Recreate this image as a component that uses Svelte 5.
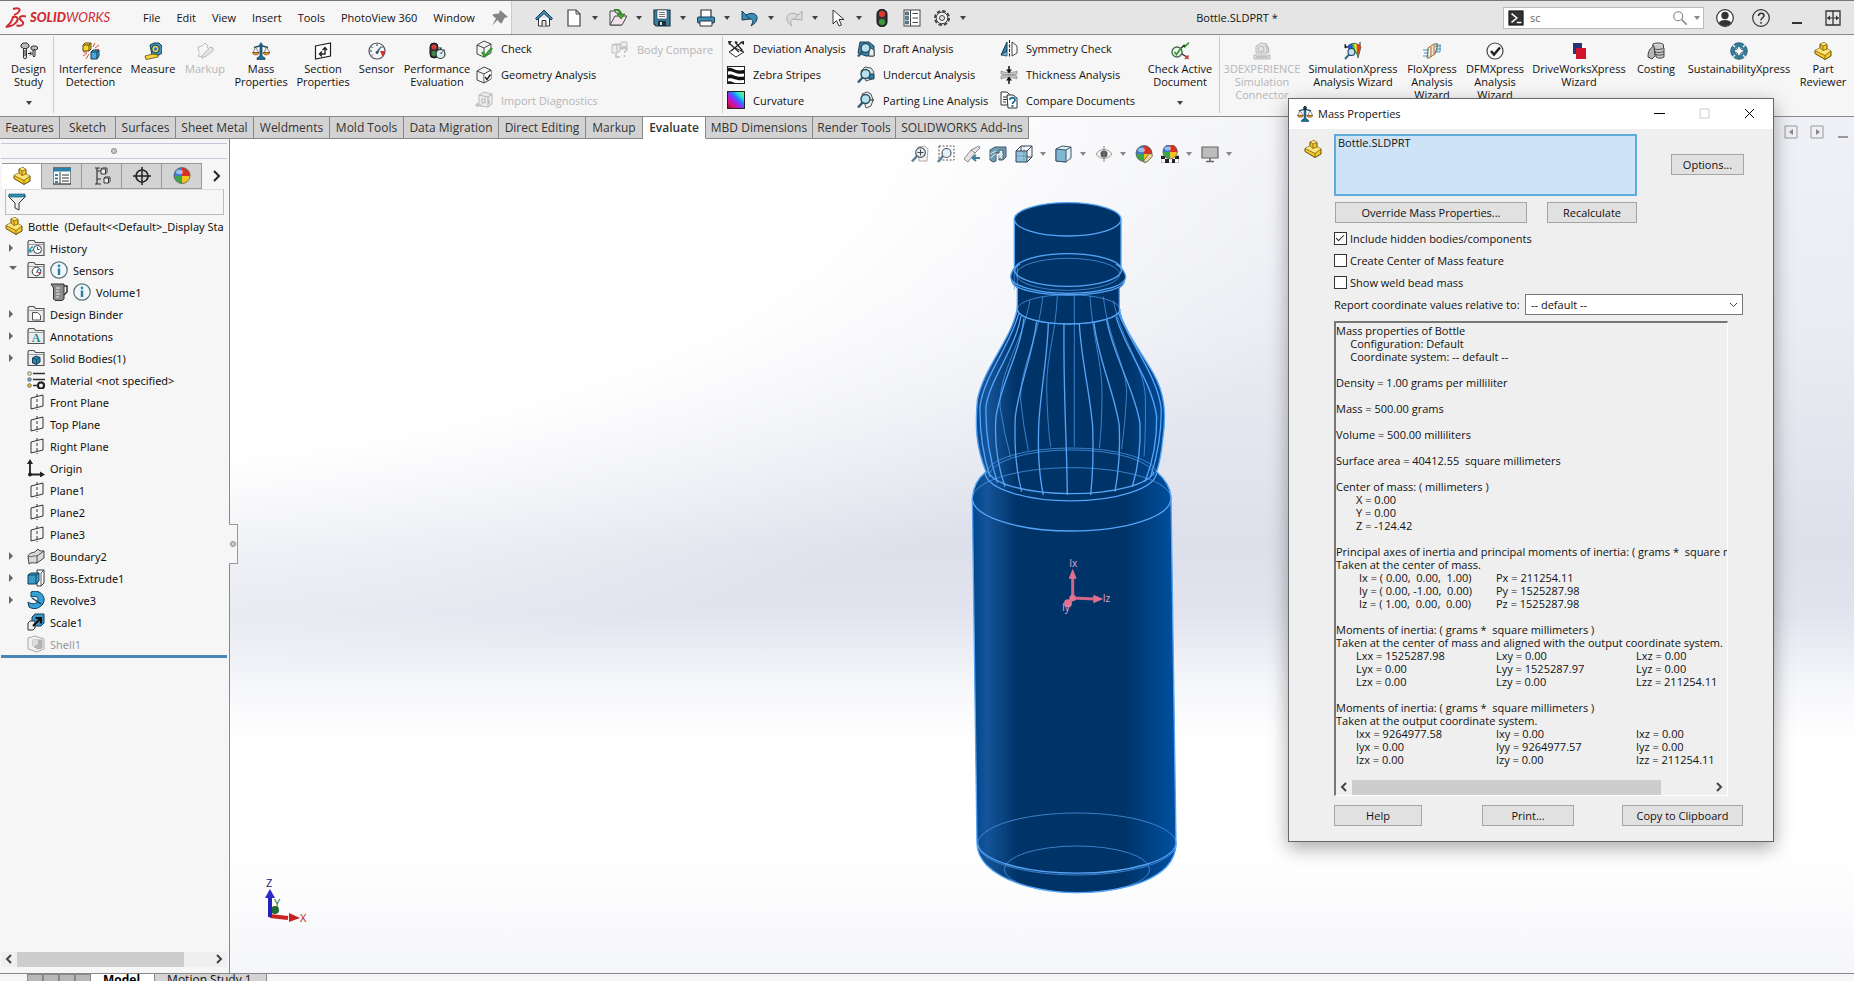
<script lang="ts">
  type Tool = { icon: string; lines: string[]; width: number; disabled?: boolean; more?: boolean };
  type Small = { icon: string; label: string; disabled?: boolean };
  type Node = { icon: string; label: string; depth?: number; arrow?: "closed" | "open"; info?: boolean; off?: boolean };

  const PART = `<path d="M1 8.500L6 6V2l4-1.500 3 2V7l4 2v5l-6 3.500-10-6z" fill="#f5c92a" stroke="#5f4a08"/><path d="M6 2l4-1.500 3 2L9 4zM1 8.500L6 6l3 2.500 4-1.500 4 2-6 4z" fill="#fde57c"/><path d="M6 2l3 2 4-1.500M9 4v4.500L6 6M9 8.500L13 7M1 8.500l10 5 6-4.500M11 13.500v4" fill="none" stroke="#7a6010" stroke-width=".8"/>`;
  const BALL = `<circle cx="9" cy="8.500" r="8" fill="#f3f3f3"/><path d="M9 9V.500A8 8 0 0 0 1 9z" fill="#3a7bd5"/><path d="M9 9V.500A8 8 0 0 1 17 9z" fill="#d93025"/><path d="M9 9h8a8 8 0 0 1-8 7.500z" fill="#f3c21c"/><path d="M9 9H1a8 8 0 0 0 8 7.500z" fill="#3ba549"/><circle cx="9" cy="8.500" r="8" fill="none" stroke="#555" stroke-width=".8"/><ellipse cx="6.500" cy="5" rx="3.500" ry="2.200" fill="#fff" opacity=".5"/>`;
  const SCALE = `<path d="M8 2h2v12l3 2v1.500H5V16l3-2z" fill="#1b6f96" stroke="#123a50" stroke-width=".7"/><path d="M2 5.500l7-2 7 2" fill="none" stroke="#174f6c" stroke-width="1.500"/><path d="M3.500 5L1 11h6zM14.500 5L12 11h6z" fill="none" stroke="#555" stroke-width=".7"/><path d="M.500 10.500h6.500c0 3-6.500 3-6.500 0zM11 10.500h6.500c0 3-6.500 3-6.500 0z" fill="#e8962c" stroke="#6b3d08" stroke-width=".7"/><circle cx="9" cy="2" r="1.500" fill="#1b6f96"/>`;
  const FOLDER = `<path d="M1 16.500V3l1-1.500h5l1.500 2H17v13z" fill="#ececec" stroke="#555" stroke-width="1.200"/><path d="M1 5.500h16" stroke="#888" stroke-width=".8"/>`;
  const PLANE = `<path d="M4 5l12-3v11L4 16z" fill="none" stroke="#333" stroke-width="1"/><path d="M10 1v16" stroke="#333" stroke-dasharray="3 2"/>`;
  const LENS = `<path d="M6 11L1 16.500" stroke="#2f5d78" stroke-width="2.500"/><circle cx="8.500" cy="8" r="4.500" fill="#b9e0ee" stroke="#2c5064" stroke-width="1.500"/>`;
  const CUBE = `<path d="M2 5l7-4 7 3v9l-7 4-7-3z" fill="#f4f4f4" stroke="#444"/><path d="M2 5l7 3 7-4M9 8v9" fill="none" stroke="#444"/>`;

  const icons: Record<string, string> = {
    part: PART,
    ball: BALL,
    scale: SCALE,
    study: `<path d="M1 3l2-2h4l2 2v2L6.500 6.500h-3L1 5z" fill="#bbb" stroke="#333"/><path d="M3.500 6.500h3V16l-1.500 1-1.500-1z" fill="#ddd" stroke="#333"/><path d="M3.500 9h3M3.500 11h3M3.500 13h3" stroke="#333"/><path d="M11 5l2-1h3l1.500 1v2L15.500 8h-3L11 7z" fill="#bbb" stroke="#333"/><path d="M13 8h2v6l-1 1-1-1z" fill="#ddd" stroke="#333"/><path d="M8 11.500h3M10 9.500l2 2-2 2" fill="none" stroke="#111"/>`,
    interference: `<path d="M1 3l2-2h6v6L7 9H1z" fill="#f7d536" stroke="#5b4a08"/><path d="M1 3h6v6M7 3l2-2" fill="none" stroke="#5b4a08"/><path d="M9 10l2-2h6v6l-2 3H9z" fill="#4aa6d6" stroke="#0f3d57"/><path d="M9 10h6v7M15 10l2-2" fill="none" stroke="#0f3d57"/><path d="M11 5l2-4M13 6l4-3M13 7.500h4M7 12l-3 5M5 11l-4 3M5 10H1" stroke="#d2392b" stroke-width=".9"/>`,
    measure: `<path d="M6 3l4-2h5l3 3v7l-3 2H8z" fill="#3f93bd" stroke="#143c54"/><circle cx="11.500" cy="7" r="3.800" fill="#f1d558" stroke="#143c54"/><circle cx="11.500" cy="7" r="1.700" fill="#2f81ab"/><path d="M1 14l8-2 5 1v2l-12 2.500z" fill="#f6d53a" stroke="#5b4a08" stroke-width=".8"/>`,
    markup: `<path d="M3 10L2 5l4-1 3-3 3 3-1 2M4 11l-2 3 4 1 1 2" fill="none" stroke="#bbb"/><path d="M6 14l8-9 3 1v3l-8 6H6z" fill="#e3e3e3" stroke="#bbb"/>`,
    section: `<path d="M1.500 4L16.500 1v13L1.500 17z" fill="#fff" stroke="#222" stroke-width="1.200"/><path d="M6 12h5V6M8.500 8L11 5.500 13 8M8 9.500L5.500 12 8 14.500" fill="none" stroke="#222" stroke-width="1.400"/>`,
    sensor: `<circle cx="9" cy="9" r="8" fill="#f4f8fb" stroke="#49535b" stroke-width="1.200"/><path d="M9 2v2M3 4.500L4.500 6M2 9h2M15 4.500L13.500 6" stroke="#333"/><path d="M12 9h5a8 8 0 0 1-2.500 5.500z" fill="#d9302a"/><path d="M8 10.500l5-6-3.500 7z" fill="#2e86c1" stroke="#15415f" stroke-width=".6"/><circle cx="9" cy="10.500" r="1.300" fill="#444"/><path d="M4 13.500l1-1" stroke="#222"/>`,
    performance: `<rect x="2" y="1" width="8" height="15" rx="4" fill="#363636" stroke="#111"/><circle cx="6" cy="5" r="2.500" fill="#dd3a30"/><circle cx="6" cy="11.500" r="2.500" fill="#3e8d43"/><circle cx="12.500" cy="12" r="4.500" fill="#d5ecf4" stroke="#333" stroke-width="1.200"/><path d="M12.500 6v1.500M11 6h3M12.500 12l2-2.500M15.500 7.500l1.500 1" stroke="#333"/>`,
    check: `${CUBE}<path d="M7 12l3 4 7-8" fill="none" stroke="#2f9a2d" stroke-width="2.500"/>`,
    geometry: `${CUBE}<path d="M9.500 8.500l6.500-3v7l-6.500 3z" fill="#fff"/><path d="M10 11l2 2.500 3.500-5" fill="none" stroke="#222" stroke-width="1.500"/>`,
    importdiag: `<path d="M4 4l5-3 8 2v10l-4 3-9-1z" fill="#ececec" stroke="#bbb"/><path d="M4 4l9 2 4-3M13 6v10M7 8h3v4H7zM14 9v4M1 14h6M3 12l-2 2 2 2" fill="none" stroke="#bbb" stroke-width="1.200"/>`,
    bodycompare: `<path d="M1 5l3-1h5v7L6 13H1zM1 5h5v8M6 5l3-1" fill="#eee" stroke="#bdbdbd"/><path d="M10 2h6v5l-2 2h-4z" fill="#eee" stroke="#bdbdbd"/><path d="M11 9c0-3 5-3 5 0 0 2-2.500 2-2.500 4M13.500 15v2M5 14v3h4" fill="none" stroke="#bdbdbd" stroke-width="1.500"/>`,
    deviation: `<path d="M2 12l6-4 9 4-8 5z" fill="#fff" stroke="#333"/><path d="M2 3l10 9M4 11L15 2M8 2l7 8" stroke="#222" stroke-width="1.200"/><path d="M1 1h4L2 5zM17 1v4l-4-3zM8 1l3 1-2 2zM16 12l-3-1 2-2.500z" fill="#222"/>`,
    zebra: `<rect x=".500" y=".500" width="17" height="17" fill="#fff" stroke="#222"/><path d="M1 2c5-1 6 4 16 2v3.500C8 9 6 4 1 5.500zM1 9c5-2 7 3 16 1.500V14C8 15 6 11 1 12.500zM1 15.500c3-1 5 1 7 1.500H1z" fill="#111"/>`,
    curvature: `<defs><linearGradient id="curv" x1="0" y1="1" x2="1" y2="0"><stop offset="0" stop-color="#7a1020"/><stop offset=".2" stop-color="#e0106a"/><stop offset=".42" stop-color="#a020f0"/><stop offset=".6" stop-color="#2080ff"/><stop offset=".75" stop-color="#20e0e0"/><stop offset="1" stop-color="#b0f020"/></linearGradient></defs><rect x=".500" y=".500" width="17" height="17" fill="url(#curv)" stroke="#222"/>`,
    draft: `<path d="M3 2h9l5 4v10H9L1 13z" fill="#3f88ae" stroke="#173e54"/><path d="M12 7l5 3v6h-5z" fill="#e9eef1" stroke="#333" stroke-width=".8"/>${LENS}`,
    undercut: `<path d="M4 5l4-4 6 1 3 4-2 7-6 2z" fill="#dfe7eb" stroke="#555"/><path d="M12 8h5v5h-5z" fill="#2f7ea8" stroke="#173e54"/>${LENS}`,
    parting: `<path d="M5 3l5-2 4 2 2 6-2 6-5 2z" fill="#eef1f3" stroke="#555"/><path d="M12 9h5" stroke="#222"/>${LENS}`,
    symmetry: `<path d="M1 15L7 2v9z" fill="#2f7ea8" stroke="#153d53"/><path d="M1 15l6-4v5z" fill="#79bad8" stroke="#153d53" stroke-width=".8"/><path d="M9.500 0v18" stroke="#222" stroke-dasharray="3 1.500"/><path d="M12 2l5 4v7l-5 3z" fill="#fff" stroke="#444"/>`,
    thickness: `<path d="M1 5c5 2 11 2 16 0v3c-5 1.500-11 1.500-16 0zM1 10c5-1.500 11-1.500 16 0v3c-5-2-11-2-16 0z" fill="#c6c6c6" stroke="#777" stroke-width=".6"/><path d="M9 0v5M9 18v-5" stroke="#111" stroke-width="1.500"/><path d="M6 3.500h6L9 7.500zM6 14.500h6L9 10.500z" fill="#111"/>`,
    compare: `<path d="M1 1h6l3 3v10H1z" fill="#fff" stroke="#333"/><path d="M3 6h4M3 8.500h4M3 11h3" stroke="#333"/><path d="M7 4h6l4 3v10H8z" fill="#fff" stroke="#333"/><path d="M10 9c0-3 5-3 5 0 0 2-2.500 1.500-2.500 4M12.500 14v2" fill="none" stroke="#1f6f98" stroke-width="1.800"/>`,
    active: `<circle cx="6" cy="10" r="5" fill="#eef5ee" stroke="#4c6b4f" stroke-width="1.400"/><path d="M3.500 10l2 2.500L10 6M12 3l1.500 2L18 .500" fill="none" stroke="#2f9a2d" stroke-width="1.700"/><path d="M10 6l4-3M11 12l3 2" stroke="#222" stroke-width="1.200"/><path d="M14 13.500l3.500 3.500M17.500 13.500L14 17" stroke="#c73a28" stroke-width="1.700"/>`,
    experience: `<path d="M3 4l5-3 6 1v9H3zM1 13h16v4H1z" fill="#e3e3e3" stroke="#b9b9b9"/><circle cx="8" cy="7" r="3" fill="none" stroke="#b9b9b9"/><path d="M12 4c4 0 4 4 3 7M3 15h12" fill="none" stroke="#b9b9b9" stroke-width="1.500"/>`,
    simulation: `<path d="M3 5c4-5 10-5 14 0l-3 11c-1-6-3-7-6-7z" fill="#35b24a" stroke="#333" stroke-width=".6"/><path d="M3 5c1-2 3-3 5-3l1 7H7z" fill="#2a52d8"/><path d="M12 2c2 0 4 1 5 3l-3 8z" fill="#ec3b24"/><path d="M10 2l2.500 0 .5 8-2-1z" fill="#f2de2c"/><path d="M16 0v4M1 2v4l2-1" stroke="#222"/><path d="M5.500 12L1 17" stroke="#2c6a90" stroke-width="2"/><circle cx="7.500" cy="10" r="3.500" fill="#bfe3f0" stroke="#23485c" stroke-width="1.200"/>`,
    flo: `<path d="M5 6l6-4h4l-3 10-6 4H4z" fill="#f3ead2" stroke="#8d6b2c"/><path d="M8 5v10M11 3v9" stroke="#c05a3a"/><path d="M0 8h6M1 11h5M0 14h6M12 4h6M13 7h5M12 10h5M14 1v9M17 2v8" stroke="#2f8eb5" stroke-width=".9" fill="none"/>`,
    dfm: `<circle cx="9" cy="9" r="8" fill="#fafafa" stroke="#444" stroke-width="1.200"/><path d="M5 9l3 3.500 6-7" fill="none" stroke="#222" stroke-width="2.500"/>`,
    drive: `<path d="M3 1h9v6H8v5H3z" fill="#24356f"/><path d="M6 6h10v11H6z" fill="#d3122c"/>`,
    costing: `<ellipse cx="11" cy="3" rx="5.500" ry="2" fill="#ddd" stroke="#444"/><path d="M6 3v3c2 2 8 2 10.500 0V3M7 6v3c2 2 8 2 10 0V6M8 9v3c2 1.500 7 1.500 9 0V9M9 12v3c2 1.500 6 1.500 8 0v-3" fill="#c9c9c9" stroke="#444"/><path d="M1 15c0-6 2-9 6-11l1 10-3 3z" fill="#b5b5b5" stroke="#444"/>`,
    sustain: `<circle cx="9" cy="9" r="6" fill="none" stroke="#347f9f" stroke-width="4.500"/><circle cx="9" cy="9" r="8.300" fill="none" stroke="#1d4d63" stroke-width=".8"/><path d="M9 3l2 4 4 2-4 2-2 4-2-4-4-2 4-2z" fill="#f6f6f6" stroke="#1d4d63" stroke-width=".8"/><path d="M3 3l2 2M15 3l-2 2M3 15l2-2M15 15l-2-2" stroke="#fff" stroke-width="1.200"/>`,
    pin: `<path d="M9 1l8 7-3.500 1-3 5.500-1.500-.5-2.500-3L1 16.500 5 9.500 1.500 6.500 2.500 5 8 4.500z" fill="#858585"/>`,
    home: `<path d="M3.500 9v8h11V9" fill="#fff" stroke="#333"/><path d="M9 1L.500 9.500l1.500 1.500L9 4.500l7 6.500 1.500-1.500z" fill="#3c8db6" stroke="#173e54"/><path d="M7 17v-5.500h4V17" fill="#d8d8d8" stroke="#333"/>`,
    file: `<path d="M3 1h8l4 4v12H3z" fill="#fff" stroke="#444" stroke-width="1.200"/><path d="M11 1v4h4" fill="none" stroke="#444"/>`,
    open: `<path d="M1 2h5l1 2h5v12H1z" fill="#ece7ea" stroke="#444"/><path d="M1 16L6 7h12l-5 9z" fill="#f2dfe8" stroke="#444"/><path d="M5 1c4-1 7 1 7 5" fill="none" stroke="#2f8a22" stroke-width="2.200"/><path d="M8 5h8l-4 5z" fill="#46a832" stroke="#246b18" stroke-width=".7"/>`,
    save: `<path d="M1 1h16v16H3l-2-2z" fill="#3a7f9f" stroke="#1c3a48" stroke-width="1.200"/><path d="M4 1h10v9H4z" fill="#fff" stroke="#1c3a48" stroke-width=".6"/><path d="M6 3.500h6M6 5.500h6M6 7.500h6" stroke="#777"/><path d="M5 12h8v5H5z" fill="#1f2f38"/><path d="M7 13h2v3H7z" fill="#ddd"/>`,
    print: `<path d="M4 8V1h10v7" fill="#fff" stroke="#333" stroke-width="1.200"/><rect x=".500" y="8" width="17" height="6" rx="1" fill="#3c8db6" stroke="#173e54"/><path d="M3 12h12v5H3z" fill="#fff" stroke="#333"/>`,
    undo: `<path d="M5 6c7-4 12 0 11 4-.5 3-3 5-6 7 2-4 4-8-5-7" fill="#3c8db6" stroke="#173e54"/><path d="M1 2v9l8-1z" fill="#3c8db6" stroke="#173e54"/>`,
    redo: `<path d="M13 6C6 2 1 6 2 10c.5 3 2 5 5 7-2-4-3-8 6-7" fill="#ddd" stroke="#aaa"/><path d="M17 2v9l-8-1z" fill="#ddd" stroke="#aaa"/>`,
    cursor: `<path d="M4 1v14l3.500-3.500L10 17l2.500-1-2.500-5.500h5z" fill="#fff" stroke="#333"/>`,
    traffic: `<rect x="4" y=".500" width="10" height="17" rx="4.500" fill="#333" stroke="#111"/><circle cx="9" cy="5" r="3" fill="#e03a2c"/><circle cx="9" cy="13" r="3" fill="#3f9a3e"/>`,
    list: `<rect x="1" y="1" width="16" height="16" fill="#fff" stroke="#444"/><path d="M7.500 1v16" stroke="#444"/><path d="M2.500 3h3v3h-3zM2.500 7.500h3v3h-3zM2.500 12h3v3h-3z" fill="#4799c0" stroke="#333" stroke-width=".6"/><path d="M9.500 4.500H15M9.500 9H15M9.500 13.500H15" stroke="#444" stroke-width="1.200"/>`,
    gear: `<circle cx="9" cy="9" r="7" fill="none" stroke="#444" stroke-width="2" stroke-dasharray="3.500 2"/><circle cx="9" cy="9" r="5.800" fill="#f0f0f0" stroke="#444"/><circle cx="9" cy="9" r="2.500" fill="#e5e5e5" stroke="#444"/>`,
    prompt: `<rect x="1" y="1" width="16" height="16" fill="#333" stroke="#111"/><path d="M4 4l6 5-6 5M10 14h5" fill="none" stroke="#fff" stroke-width="1.700"/>`,
    magnifier: `<circle cx="7" cy="7" r="5" fill="none" stroke="#888" stroke-width="1.300"/><path d="M11 11l5.500 5.500" stroke="#888" stroke-width="1.800"/>`,
    user: `<circle cx="9" cy="9" r="8.300" fill="#fff" stroke="#333" stroke-width="1.200"/><circle cx="9" cy="6.500" r="3.700" fill="#333"/><path d="M2.800 14c1-4 11.400-4 12.400 0-3 4-9.400 4-12.400 0z" fill="#333"/>`,
    help: `<circle cx="9" cy="9" r="8.300" fill="none" stroke="#333" stroke-width="1.200"/><path d="M6.500 7c0-4 5.500-3.500 5.500-.500C12 9 9 8.500 9 11.500M9 13v1.700" fill="none" stroke="#333" stroke-width="1.500"/>`,
    minus: `<path d="M4 14h10" stroke="#333" stroke-width="2"/>`,
    split: `<path d="M2 2h14v14H2zM9 2v14" fill="none" stroke="#333" stroke-width="1.300"/><path d="M3.500 9h11" stroke="#333"/><path d="M3 9l3-2.500v5zM15 9l-3-2.500v5z" fill="#333"/>`,
    zoomfit: `<path d="M7 2l7-1 3 3-1 12H8z" fill="#f4f4f4" stroke="#999" stroke-width=".8"/><path d="M6 11L1 16.500" stroke="#5d7f93" stroke-width="2.500"/><circle cx="9.500" cy="7.500" r="4.800" fill="#e3f1f7" stroke="#556" stroke-width="1.200"/><path d="M9.500 4.500v6M6.500 7.500h6" stroke="#444"/>`,
    zoomarea: `<rect x="2" y="1" width="15" height="14" fill="none" stroke="#555" stroke-dasharray="2 1.500"/><path d="M6 11L1 17" stroke="#5d7f93" stroke-width="2.500"/><circle cx="9.500" cy="8" r="4.500" fill="#e3f1f7" stroke="#556" stroke-width="1.200"/>`,
    previous: `<path d="M16 1l-8 4-7 9 4 3 7-9 5-5z" fill="#e6e6e6" stroke="#888"/><path d="M8 5l4 3" stroke="#888"/><path d="M10 13h7M13 10l-3.500 3L13 16" fill="none" stroke="#3a7f9f" stroke-width="1.800"/>`,
    cut: `<path d="M1 5l5-3 11 0v10l-3 3h-4V8H7v8l-3 1-3-2z" fill="#6f9db4" stroke="#456"/><path d="M7 8h3V5h4v10" fill="#d9e7ee" stroke="#456"/><path d="M1 9l6-3M1 13l6-4M10 13l4-4" stroke="#d9e7ee"/>`,
    orient: `<path d="M1 6h11v11H1z" fill="#8fc3dc" stroke="#345"/><path d="M1 6l5-5h11v11l-5 5M12 6l5-5M6 1v5M12 12h5" fill="none" stroke="#345"/><path d="M9 1v16M1 11h11" stroke="#567" stroke-width=".6" stroke-dasharray="2 1"/>`,
    shaded: `<path d="M1 4l6-3 9 1v11l-5 4-10-1z" fill="#dff0f8" stroke="#456"/><path d="M1 4l10 1v12L1 16z" fill="#7fb8d4" stroke="#456"/><path d="M11 5l5-3" stroke="#456"/>`,
    eye: `<path d="M1 9c4-6 12-6 16 0-4 6-12 6-16 0z" fill="#f1f1f1" stroke="#999"/><circle cx="9" cy="9" r="3.500" fill="#555"/><path d="M9 1v16" stroke="#888"/>`,
    appearance: `${BALL}<path d="M9 15l6-7 3 2.500-6 6.500-3 .5z" fill="#f2d7a0" stroke="#555" stroke-width=".8"/>`,
    scene: `<path d="M0 11h18v7H0z" fill="#fff" stroke="#333" stroke-width=".5"/><path d="M0 11h4v3H0zM14 11h4v3h-4zM4 14h4v4H4zM11 14h3v4h-3z" fill="#222"/><g transform="translate(1 -1) scale(.9)">${BALL}</g>`,
    monitor: `<path d="M1 2h16v11H1z" fill="#bcbcbc" stroke="#666" stroke-width="1.200"/><path d="M9 13v3M5 16.500h8" stroke="#666" stroke-width="1.500"/>`,
    props: `<rect x="0" y="1" width="18" height="16" fill="#fff" stroke="#333" stroke-width="1.200"/><path d="M0 1h18v3.500H0z" fill="#2d7fa8"/><path d="M7 5v12" stroke="#333"/><path d="M2 7h3v2H2zM2 10.500h3v2H2zM2 14h3v2H2z" fill="#2d7fa8"/><path d="M9 8h7M9 11h7M9 14h7" stroke="#333" stroke-width="1.200"/>`,
    config: `<path d="M4 1v16h4M4 4h4M4 12h4M2 1h5M2 17h3" fill="none" stroke="#333" stroke-width="1.200"/><path d="M8 2l1.500-1H14v4.500L12.500 7H8zM8 2h4.500v5M11 11l1.500-1H17v4.500L15.500 16H11zM11 11h4.500v5" fill="#eee" stroke="#333"/>`,
    target: `<circle cx="9" cy="9" r="6" fill="none" stroke="#222" stroke-width="1.700"/><path d="M9 0v18M0 9h18" stroke="#222" stroke-width="1.500"/>`,
    filter: `<path d="M1 2h16v2l-6 6v7l-4-2v-5L1 4z" fill="#e8eef1" stroke="#333"/><path d="M1 1h16v3H1z" fill="#2d91bd" stroke="#1b4a60" stroke-width=".6"/>`,
    history: `${FOLDER}<circle cx="10.500" cy="10.500" r="4" fill="#fff" stroke="#345"/><path d="M10.500 8v2.500h2" fill="none" stroke="#345"/><path d="M3 12c0-3 2-4 3-4M1.500 10.500L3 13l3-2" fill="none" stroke="#2a9ab5" stroke-width="1.500"/>`,
    sensors: `${FOLDER}<circle cx="9.500" cy="10.500" r="4.300" fill="#fff" stroke="#333"/><path d="M9.500 12l2-4" stroke="#2a7ab5" stroke-width="1.500"/><path d="M11 11h3l-1.500 3z" fill="#d9302a"/>`,
    volume: `<path d="M1 1h13v15l-2 1.500H5L3.500 16V5z" fill="#8c8c8c" stroke="#333"/><path d="M6 5h4M6 8h3M6 11h4M6 14h3" stroke="#eee"/><path d="M14 3h3v6l-3 3" fill="none" stroke="#333" stroke-width="1.500"/>`,
    info: `<circle cx="9" cy="9" r="8.200" fill="#eef7fa" stroke="#5c7078" stroke-width="1.200"/><circle cx="9" cy="5" r="1.400" fill="#2b8bb0"/><path d="M9 7.500V14" stroke="#2b7d9d" stroke-width="2.400"/>`,
    binder: `${FOLDER}<path d="M5.500 7.500h5l3 3V15h-8z" fill="#fff" stroke="#555"/>`,
    annotations: `${FOLDER}<text x="9" y="15" text-anchor="middle" font-family="Liberation Serif" font-size="12" font-weight="bold" fill="#1f8ba3">A</text>`,
    bodies: `${FOLDER}<path d="M5.500 9L9 7l4 1.500V13L9.500 15.500l-4-1.500z" fill="#2a86b0" stroke="#123c52"/><path d="M5.500 9l4 1.500L13 8.500M9.500 10.500v5" fill="none" stroke="#123c52" stroke-width=".8"/>`,
    material: `<path d="M6 2.500h12M6 8.500h12M6 14.500h4" stroke="#333" stroke-width="1.600"/><circle cx="2.500" cy="2.500" r="1.800" fill="#fbe9b0" stroke="#555" stroke-width=".8"/><circle cx="2.500" cy="8.500" r="1.800" fill="#71a7e6" stroke="#555" stroke-width=".8"/><circle cx="2.500" cy="14.500" r="1.800" fill="#eec72c" stroke="#555" stroke-width=".8"/><circle cx="14" cy="14.500" r="3" fill="none" stroke="#222" stroke-width="2"/><circle cx="14" cy="14.500" r="3.700" fill="none" stroke="#222" stroke-dasharray="1.500 1.400"/>`,
    plane: PLANE,
    origin: `<path d="M3 3v12.500h12" fill="none" stroke="#222" stroke-width="1.800"/><path d="M0 5l3-5 3 5zM13 12.500l5 3-5 3z" fill="#222"/><circle cx="3" cy="15.500" r="2" fill="#222"/>`,
    boundary: `<path d="M1 9c3-5 5-2 8-5l2-2c1 2 3 2 6 2v7l-7 5c-4 0-6-1-8 1z" fill="#d9d9d9" stroke="#444"/><path d="M1 9c4 2 5-1 9 0l7-5M10 9v7" fill="none" stroke="#444" stroke-width=".9"/>`,
    boss: `<path d="M10 1h7v13l-3 3h-4z" fill="#fff" stroke="#333"/><path d="M14 4v13M14 4l3-3" stroke="#333" stroke-width=".8"/><path d="M1 6l3-2h8v8l-3 3H1z" fill="#3a9bc8" stroke="#0f3d57"/><path d="M1 6h8v9M9 6l3-2" fill="none" stroke="#0f3d57" stroke-width=".9"/>`,
    revolve: `<path d="M4 1c8-3 14 3 13 9s-9 10-15 6l-1-5c4 3 10 2 10-2S8 5 4 6z" fill="#35a0d6" stroke="#0f3d57"/><path d="M5 7l9 6" stroke="#0f3d57" stroke-width="1.500"/>`,
    scaleup: `<path d="M5 4l3-3h9v9l-3 3H5z" fill="#3a9bc8" stroke="#0f3d57"/><path d="M1 10l2-2h5v7l-2 2H1z" fill="#eee" stroke="#333"/><path d="M6 13l7-7M8.500 5H14v5.500" fill="none" stroke="#111" stroke-width="2.200"/>`,
    shell: `<path d="M1 3l7-2 9 3v10l-7 3-9-3z" fill="#f1f1f1" stroke="#aaa"/><path d="M6 5l9 0v8l-4 1-5-3z" fill="#b5b5b5" stroke="#aaa"/><path d="M6 5v7l5-3V5" fill="#ddd"/>`,
  };

  const menus = ["File", "Edit", "View", "Insert", "Tools", "PhotoView 360", "Window"];

  const quick = [
    { icon: "home" },
    { icon: "file", more: true },
    { icon: "open", more: true },
    { icon: "save", more: true },
    { icon: "print", more: true },
    { icon: "undo", more: true },
    { icon: "redo", more: true },
    { icon: "cursor", more: true },
    { icon: "traffic" },
    { icon: "list" },
    { icon: "gear", more: true },
  ];

  const evaluate: Tool[] = [
    { icon: "interference", lines: ["Interference", "Detection"], width: 71 },
    { icon: "measure", lines: ["Measure"], width: 54 },
    { icon: "markup", lines: ["Markup"], width: 50, disabled: true },
    { icon: "scale", lines: ["Mass", "Properties"], width: 62 },
    { icon: "section", lines: ["Section", "Properties"], width: 62 },
    { icon: "sensor", lines: ["Sensor"], width: 45 },
    { icon: "performance", lines: ["Performance", "Evaluation"], width: 76 },
  ];

  const checks: Small[] = [
    { icon: "check", label: "Check" },
    { icon: "geometry", label: "Geometry Analysis" },
    { icon: "importdiag", label: "Import Diagnostics", disabled: true },
  ];

  const analysis: Small[][] = [
    [
      { icon: "deviation", label: "Deviation Analysis" },
      { icon: "zebra", label: "Zebra Stripes" },
      { icon: "curvature", label: "Curvature" },
    ],
    [
      { icon: "draft", label: "Draft Analysis" },
      { icon: "undercut", label: "Undercut Analysis" },
      { icon: "parting", label: "Parting Line Analysis" },
    ],
    [
      { icon: "symmetry", label: "Symmetry Check" },
      { icon: "thickness", label: "Thickness Analysis" },
      { icon: "compare", label: "Compare Documents" },
    ],
  ];

  const wizards: Tool[] = [
    { icon: "experience", lines: ["3DEXPERIENCE", "Simulation", "Connector"], width: 84, disabled: true },
    { icon: "simulation", lines: ["SimulationXpress", "Analysis Wizard"], width: 98 },
    { icon: "flo", lines: ["FloXpress", "Analysis", "Wizard"], width: 60 },
    { icon: "dfm", lines: ["DFMXpress", "Analysis", "Wizard"], width: 66 },
    { icon: "drive", lines: ["DriveWorksXpress", "Wizard"], width: 102 },
    { icon: "costing", lines: ["Costing"], width: 52 },
    { icon: "sustain", lines: ["SustainabilityXpress"], width: 114 },
    { icon: "part", lines: ["Part", "Reviewer"], width: 54 },
  ];

  const tabs = [
    { label: "Features", width: 60 },
    { label: "Sketch", width: 56 },
    { label: "Surfaces", width: 60 },
    { label: "Sheet Metal", width: 78 },
    { label: "Weldments", width: 76 },
    { label: "Mold Tools", width: 74 },
    { label: "Data Migration", width: 95 },
    { label: "Direct Editing", width: 87 },
    { label: "Markup", width: 57 },
    { label: "Evaluate", width: 63 },
    { label: "MBD Dimensions", width: 107 },
    { label: "Render Tools", width: 83 },
    { label: "SOLIDWORKS Add-Ins", width: 133 },
  ];
  let activeTab = $state("Evaluate");

  const panes = ["part", "props", "config", "target", "ball"];

  const tree: Node[] = [
    { icon: "history", label: "History", arrow: "closed" },
    { icon: "sensors", label: "Sensors", arrow: "open", info: true },
    { icon: "volume", label: "Volume1", depth: 1, info: true },
    { icon: "binder", label: "Design Binder", arrow: "closed" },
    { icon: "annotations", label: "Annotations", arrow: "closed" },
    { icon: "bodies", label: "Solid Bodies(1)", arrow: "closed" },
    { icon: "material", label: "Material <not specified>" },
    { icon: "plane", label: "Front Plane" },
    { icon: "plane", label: "Top Plane" },
    { icon: "plane", label: "Right Plane" },
    { icon: "origin", label: "Origin" },
    { icon: "plane", label: "Plane1" },
    { icon: "plane", label: "Plane2" },
    { icon: "plane", label: "Plane3" },
    { icon: "boundary", label: "Boundary2", arrow: "closed" },
    { icon: "boss", label: "Boss-Extrude1", arrow: "closed" },
    { icon: "revolve", label: "Revolve3", arrow: "closed" },
    { icon: "scaleup", label: "Scale1" },
    { icon: "shell", label: "Shell1", off: true },
  ];

  const hud = [
    { icon: "zoomfit" },
    { icon: "zoomarea" },
    { icon: "previous" },
    { icon: "cut" },
    { icon: "orient", more: true },
    { icon: "shaded", more: true },
    { icon: "eye", more: true },
    { icon: "appearance" },
    { icon: "scene", more: true },
    { icon: "monitor", more: true },
  ];

  // bottle edges, three units per pixel
  const frontFlutes = [
    "M372 432C371 540 374 660 377 750Q381 850 382 945",
    "M325 430C322 530 304 620 297 720Q290 850 310 945",
    "M290 425C275 540 238 610 226 710Q220 840 245 935",
    "M252 415C240 520 182 610 168 710Q160 820 195 920",
    "M243 408C225 510 148 600 138 680Q135 790 172 908",
    "M236 400C215 490 130 590 120 680Q118 790 150 890",
    "M418 432C424 540 450 640 458 740Q462 850 452 945",
    "M462 428C474 540 528 650 538 740Q542 840 525 935",
    "M500 420C520 530 585 630 600 730Q604 830 577 920",
    "M528 410C560 520 635 600 650 710Q652 810 615 905",
    "M536 400C570 490 655 590 664 690Q664 790 632 890",
  ];
  const backFlutes = [
    "M403 342V800",
    "M352 347C347 460 320 530 320 620Q322 730 332 802",
    "M308 350C298 470 240 560 242 660Q250 740 265 812",
    "M270 360C250 480 175 580 180 680Q192 760 212 832",
    "M450 347C456 460 488 560 486 640Q486 730 478 805",
    "M490 350C505 480 560 560 560 640Q556 730 545 808",
    "M520 362C545 480 612 560 616 650Q618 750 612 830",
  ];

  let includeHidden = $state(true);
  let createCenter = $state(false);
  let showWeld = $state(false);
  let coordinate = $state("default");

  const summary = `Mass properties of Bottle
     Configuration: Default
     Coordinate system: -- default --

Density = 1.00 grams per milliliter

Mass = 500.00 grams

Volume = 500.00 milliliters

Surface area = 40412.55  square millimeters

Center of mass: ( millimeters )
       X = 0.00
       Y = 0.00
       Z = -124.42

Principal axes of inertia and principal moments of inertia: ( grams *  square m
Taken at the center of mass.`;

  const principal = [
    ["Ix = ( 0.00,  0.00,  1.00)", "Px = 211254.11"],
    ["Iy = ( 0.00, -1.00,  0.00)", "Py = 1525287.98"],
    ["Iz = ( 1.00,  0.00,  0.00)", "Pz = 1525287.98"],
  ];
  const momentsMass = [
    ["Lxx = 1525287.98", "Lxy = 0.00", "Lxz = 0.00"],
    ["Lyx = 0.00", "Lyy = 1525287.97", "Lyz = 0.00"],
    ["Lzx = 0.00", "Lzy = 0.00", "Lzz = 211254.11"],
  ];
  const momentsOutput = [
    ["Ixx = 9264977.58", "Ixy = 0.00", "Ixz = 0.00"],
    ["Iyx = 0.00", "Iyy = 9264977.57", "Iyz = 0.00"],
    ["Izx = 0.00", "Izy = 0.00", "Izz = 211254.11"],
  ];
</script>

{#snippet icon(name: string)}
  <svg class="icon" viewBox="0 0 18 18" aria-hidden="true">{@html icons[name]}</svg>
{/snippet}

{#snippet bigTool(t: Tool)}
  <button class="big" disabled={t.disabled} style="width: {t.width}px">
    {@render icon(t.icon)}
    {#each t.lines as line}<span>{line}</span>{/each}
    {#if t.more}<i class="caret"></i>{/if}
  </button>
{/snippet}

{#snippet smallTool(t: Small)}
  <button class="small" disabled={t.disabled}>{@render icon(t.icon)}<span>{t.label}</span></button>
{/snippet}

{#snippet scrollbar(label: string)}
  <div class="scrollbar">
    <button aria-label="{label} left"><svg viewBox="0 0 8 10"><path d="M6 1L2 5l4 4" /></svg></button>
    <div class="track"><div class="thumb"></div></div>
    <button aria-label="{label} right"><svg viewBox="0 0 8 10"><path d="M2 1l4 4-4 4" /></svg></button>
  </div>
{/snippet}

{#snippet matrix(rows: string[][])}
  <table>
    <tbody>
      {#each rows as row}
        <tr>{#each row as cell}<td>{cell}</td>{/each}</tr>
      {/each}
    </tbody>
  </table>
{/snippet}

<div class="app">
  <header class="titlebar">
    <div class="menubar">
      <div class="logo">
        <svg viewBox="0 0 22 22" aria-hidden="true">
          <path d="M8 2c5-1.500 8-.5 6 2.500-1 1.500-3 3-5 3.500" />
          <path d="M1 20c3-2 6-6 7-10 5-1 6 2 3 5.500C9 18 5 19.500 1 20z" />
          <path d="M21 9.500c-4-1-7 0-6 2.500.7 1.500 4 2.500 3 5-.7 1.700-4 2-6.500 1.500" />
        </svg>
        <span><b>SOLID</b>WORKS</span>
      </div>
      <nav>
        {#each menus as m}<button>{m}</button>{/each}
      </nav>
      <button class="pin" aria-label="Pin">{@render icon("pin")}</button>
    </div>
    <div class="quick">
      {#each quick as q}
        <div class="drop" class:more={q.more}>
          <button aria-label={q.icon}>{@render icon(q.icon)}</button>
          {#if q.more}<button class="arrow" aria-label="{q.icon} options"><i class="caret"></i></button>{/if}
        </div>
      {/each}
    </div>
    <div class="document">Bottle.SLDPRT *</div>
    <div class="search">
      {@render icon("prompt")}
      <input type="text" value="sc" aria-label="Search" />
      {@render icon("magnifier")}
      <i class="caret"></i>
    </div>
    <div class="window">
      <button aria-label="User">{@render icon("user")}</button>
      <button aria-label="Help">{@render icon("help")}</button>
      <button aria-label="Minimize">{@render icon("minus")}</button>
      <button aria-label="Span displays">{@render icon("split")}</button>
    </div>
  </header>

  <div class="ribbon">
    <div class="group study">{@render bigTool({ icon: "study", lines: ["Design", "Study"], width: 49, more: true })}</div>
    <div class="group first">
      {#each evaluate as t}{@render bigTool(t)}{/each}
      <div class="stack checks">{#each checks as t}{@render smallTool(t)}{/each}</div>
      <div class="stack compare">{@render smallTool({ icon: "bodycompare", label: "Body Compare", disabled: true })}</div>
    </div>
    <div class="group analysis">
      {#each analysis as column}
        <div class="stack">{#each column as t}{@render smallTool(t)}{/each}</div>
      {/each}
      {@render bigTool({ icon: "active", lines: ["Check Active", "Document"], width: 76, more: true })}
    </div>
    <div class="group">
      {#each wizards as t}{@render bigTool(t)}{/each}
    </div>
  </div>

  <div class="stage">
    <div class="tabs">
      {#each tabs as t}
        <button class:active={t.label === activeTab} style="width: {t.width}px" onclick={() => (activeTab = t.label)}>{t.label}</button>
      {/each}
    </div>

    <div class="work">
      <aside>
        <div class="grip"><i class="dot"></i></div>
        <div class="panes">
          {#each panes as p, i}
            <button class:active={i === 0} aria-label={p}>{@render icon(p)}</button>
          {/each}
          <button class="next" aria-label="More panes"><svg viewBox="0 0 8 14"><path d="M1 2l5 5-5 5" /></svg></button>
        </div>
        <div class="filter">{@render icon("filter")}<input type="text" aria-label="Filter" /></div>
        <ul class="tree">
          <li class="root">{@render icon("part")}<span>Bottle&nbsp; (Default&lt;&lt;Default&gt;_Display Sta</span></li>
          {#each tree as n}
            <li class:child={n.depth} class:off={n.off}>
              <i class="twist {n.arrow ?? ''}"></i>
              {@render icon(n.icon)}
              {#if n.info}{@render icon("info")}{/if}
              <span>{n.label}</span>
            </li>
          {/each}
        </ul>
        <div class="rollback"></div>
        {@render scrollbar("Tree")}
        <button class="handle" aria-label="Collapse panel"><i class="dot"></i></button>
      </aside>

      <main>
        <div class="hud">
          {#each hud as h}
            <div class="drop" class:more={h.more}>
              <button aria-label={h.icon}>{@render icon(h.icon)}</button>
              {#if h.more}<button class="arrow" aria-label="{h.icon} options"><i class="caret"></i></button>{/if}
            </div>
          {/each}
        </div>

        <div class="docwindow">
          <button aria-label="Previous window"><svg viewBox="0 0 14 14"><path d="M1 1h12v12H1z" /><path class="solid" d="M9 4v6L5 7z" /></svg></button>
          <button aria-label="Next window"><svg viewBox="0 0 14 14"><path d="M1 1h12v12H1z" /><path class="solid" d="M6 4v6l4-3z" /></svg></button>
          <button aria-label="Minimize document"><svg viewBox="0 0 14 14"><path d="M2 12h10" stroke-width="2" /></svg></button>
        </div>

        <svg class="bottle" viewBox="0 0 840 2220" role="img" aria-label="Bottle model">
          <defs>
            <linearGradient id="skin" x1="0" x2="1" y1="0" y2="0">
              <stop offset="0" stop-color="#00458a" />
              <stop offset=".07" stop-color="#15549a" />
              <stop offset=".22" stop-color="#003468" />
              <stop offset=".75" stop-color="#003468" />
              <stop offset="1" stop-color="#0050a2" />
            </linearGradient>
          </defs>
          <path
            fill="url(#skin)"
            d="M223 118A160 50 0 0 1 543 118V262Q557 275 557 292Q555 315 538 325V385C545 440 600 510 640 580C674 640 680 700 668 780Q662 840 650 875Q690 910 693 950L708 1990Q708 2030 680 2060C620 2120 500 2138 411 2138C320 2138 200 2115 140 2056Q112 2025 111 1992L97 955Q100 905 138 875C108 800 105 740 112 660C128 580 185 510 215 440Q232 400 232 375V325Q212 312 212 290Q212 275 223 262Z"
          />
          <g class="edge thin">
            <path d="M97 955A298 92 0 0 1 693 955" />
            <path d="M140 880A254 76 0 0 1 648 880M148 888A246 78 0 0 1 642 888" />
            <ellipse cx="411" cy="1992" rx="298" ry="93" />
            <ellipse cx="411" cy="2068" rx="218" ry="70" />
            <ellipse cx="386" cy="388" rx="154" ry="44" />
            <ellipse cx="384" cy="283" rx="155" ry="48" />
            <path d="M223 268V330M232 262V325" />
            {#each backFlutes as d}<path {d} />{/each}
          </g>
          <g class="edge">
            <ellipse class="mouth" cx="383" cy="118" rx="160" ry="50" />
            <ellipse cx="384" cy="270" rx="160" ry="49" />
            <path d="M212 290A172 50 0 0 0 557 290M216 303A168 42 0 0 0 553 303M212 290Q214 270 240 252M557 290Q555 270 528 252" />
            <path d="M232 388A154 44 0 0 0 540 388" />
            <path d="M135 880A258 88 0 0 0 650 880M145 875A250 74 0 0 0 642 875" />
            <path d="M97 955A298 98 0 0 0 693 955" />
            <path d="M113 1992A298 93 0 0 0 708 1992" />
            <path
              d="M223 118V262M543 118V262M538 325V385C545 440 600 510 640 580C674 640 680 700 668 780Q662 840 650 875Q690 910 693 950L708 1990Q708 2030 680 2060C620 2120 500 2138 411 2138C320 2138 200 2115 140 2056Q112 2025 111 1992L97 955Q100 905 138 875C108 800 105 740 112 660C128 580 185 510 215 440Q232 400 232 375V325"
            />
            {#each frontFlutes as d}<path {d} />{/each}
          </g>
          <g class="inertia">
            <path class="shaft" d="M398 1254V1190M398 1254L466 1257M398 1254L384 1272" />
            <path d="M386 1196L398 1166l12 30zM460 1244l30 13-30 13z" />
            <circle cx="398" cy="1254" r="10" />
            <circle cx="384" cy="1270" r="12" />
            <text x="388" y="1162">Ix</text>
            <text x="488" y="1267">Iz</text>
            <text x="366" y="1294">Iy</text>
          </g>
        </svg>

        <svg class="triad" viewBox="0 0 60 60" role="img" aria-label="Orientation triad">
          <circle cx="20" cy="38" r="4" fill="#1d6b34" />
          <path d="M15 44l18 2" stroke="#c22" stroke-width="4" />
          <path d="M34 41l11 5-11 4z" fill="#c81e1e" />
          <path d="M15 45V24" stroke="#2222b8" stroke-width="4" />
          <path d="M10 26l5-9 5 9z" fill="#2a2ac8" />
          <text x="11" y="15" fill="#1a1a80">Z</text>
          <text x="19" y="35" fill="#1d6b34">Y</text>
          <text x="45" y="50" fill="#b01818">X</text>
        </svg>
      </main>
    </div>
  </div>

  <footer>
    <div class="steps"><i></i><i></i><i></i><i></i></div>
    <button class="active">Model</button>
    <button>Motion Study 1</button>
  </footer>

  <section class="dialog" aria-label="Mass Properties">
    <div class="caption">
      {@render icon("scale")}
      <h2>Mass Properties</h2>
      <button aria-label="Minimize dialog"><svg viewBox="0 0 11 11"><path d="M0 5.500h11" /></svg></button>
      <button aria-label="Maximize dialog" disabled><svg viewBox="0 0 11 11"><path d="M1 1h9v9H1z" /></svg></button>
      <button aria-label="Close dialog"><svg viewBox="0 0 11 11"><path d="M1 1l9 9M10 1l-9 9" /></svg></button>
    </div>
    <div class="content">
      <div class="selection">
        {@render icon("part")}
        <div class="picked">Bottle.SLDPRT</div>
        <button class="push options">Options...</button>
      </div>
      <div class="fields">
        <div class="actions">
          <button class="push override">Override Mass Properties...</button>
          <button class="push recalc">Recalculate</button>
        </div>
        <label class="tick"><input type="checkbox" bind:checked={includeHidden} />Include hidden bodies/components</label>
        <label class="tick"><input type="checkbox" bind:checked={createCenter} />Create Center of Mass feature</label>
        <label class="tick"><input type="checkbox" bind:checked={showWeld} />Show weld bead mass</label>
        <div class="relative">
          <label for="coordinate">Report coordinate values relative to:</label>
          <select id="coordinate" bind:value={coordinate}><option value="default">-- default --</option></select>
        </div>
        <div class="report">
          <pre>{summary}</pre>
          <div class="axes">{@render matrix(principal)}</div>
          <pre>{"\n"}Moments of inertia: ( grams *  square millimeters )
Taken at the center of mass and aligned with the output coordinate system.</pre>
          {@render matrix(momentsMass)}
          <pre>{"\n"}Moments of inertia: ( grams *  square millimeters )
Taken at the output coordinate system.</pre>
          {@render matrix(momentsOutput)}
          {@render scrollbar("Report")}
        </div>
        <div class="buttons">
          <button class="push help">Help</button>
          <button class="push print">Print...</button>
          <button class="push copy">Copy to Clipboard</button>
        </div>
      </div>
    </div>
  </section>
</div>

<style>
  :global(body) {
    margin: 0;
    overflow: hidden;
  }

  .app {
    position: relative;
    display: flex;
    flex-direction: column;
    height: 100vh;
    overflow: hidden;
    background: #f6f6f6;
    color: #111;
    font: 11px/13px "Open Sans", "Noto Sans", sans-serif;
  }

  button,
  input,
  select {
    font: inherit;
    color: inherit;
  }

  button {
    padding: 0;
    border: 0;
    background: none;
    white-space: nowrap;
  }

  .icon {
    display: block;
    flex: none;
    width: 18px;
    height: 18px;
  }

  .caret {
    display: block;
    border: 3px solid transparent;
    border-top: 4px solid #444;
    border-bottom: 0;
  }

  .dot {
    display: block;
    width: 4px;
    height: 4px;
    border: 1px solid #888;
    border-radius: 50%;
    background: #ccc;
  }

  /* title bar */
  .titlebar {
    display: flex;
    align-items: center;
    flex: none;
    height: 33px;
    border-top: 1px solid #777;
    border-bottom: 1px solid #888;
    background: #e5e5e5;
  }

  .menubar {
    display: flex;
    align-items: center;
    box-sizing: border-box;
    width: 512px;
    height: 100%;
    padding-left: 5px;
    background: #f6f6f6;
    border-right: 1px solid #ccc;
  }

  .logo {
    display: flex;
    align-items: center;
    gap: 3px;
    width: 138px;
    color: #cf2a30;
    font-family: Lato, sans-serif;
    font-size: 13px;
    font-style: italic;
  }

  .logo svg {
    width: 22px;
    height: 22px;
    fill: none;
    stroke: #cf2a30;
    stroke-width: 2;
  }

  .logo b {
    font-weight: 900;
  }

  nav {
    display: flex;
    flex: 1;
    gap: 16px;
  }

  .pin {
    margin-right: 2px;
  }

  .quick {
    display: flex;
    padding-left: 23px;
  }

  .drop {
    display: flex;
    align-items: center;
    margin-right: 12px;
  }

  .drop.more {
    margin-right: 8px;
  }

  .arrow {
    display: flex;
    justify-content: center;
    width: 12px;
    margin-left: 6px;
  }

  .document {
    flex: 1;
    padding-right: 6px;
    text-align: center;
  }

  .search {
    display: flex;
    align-items: center;
    box-sizing: border-box;
    width: 201px;
    height: 22px;
    padding: 0 3px 0 4px;
    border: 1px solid #bbb;
    background: #fff;
  }

  .search .icon {
    width: 16px;
    height: 16px;
    margin-right: 6px;
  }

  .search .caret {
    border-top-color: #888;
  }

  .search input {
    flex: 1;
    min-width: 0;
    padding: 0;
    border: 0;
    outline: 0;
    color: #666;
  }

  .window {
    display: flex;
    gap: 18px;
    padding: 0 12px;
  }

  /* command ribbon */
  .ribbon {
    display: flex;
    flex: none;
    height: 81px;
    border-bottom: 1px solid #888;
    background: #f6f6f6;
  }

  .group {
    display: flex;
    flex: none;
    margin: 1px 0 3px;
    border-right: 1px solid #ccc;
  }

  .group:last-child {
    border: 0;
  }

  .group.study {
    padding-left: 4px;
  }

  .group.first {
    box-sizing: border-box;
    width: 669px;
    padding-left: 1px;
  }

  .group.analysis {
    box-sizing: border-box;
    width: 497px;
    padding-left: 4px;
  }

  .big {
    display: flex;
    flex: none;
    flex-direction: column;
    align-items: center;
    padding-top: 6px;
  }

  .big .icon {
    margin-bottom: 2px;
  }

  .big .caret {
    margin-top: 13px;
  }

  button:disabled {
    color: #b5b5b5;
  }

  .stack {
    display: flex;
    flex: none;
    flex-direction: column;
    width: 130px;
  }

  .stack.checks {
    width: 136px;
  }

  .stack.compare {
    width: 110px;
  }

  .analysis .stack + .stack {
    width: 143px;
  }

  .analysis .stack + .stack + .stack {
    width: 142px;
  }

  .small {
    display: flex;
    align-items: center;
    gap: 8px;
    height: 26px;
  }

  /* command tabs */
  .stage {
    display: flex;
    flex: 1;
    flex-direction: column;
    min-height: 0;
    background:
      radial-gradient(ellipse 76% 66% at 0 0, #fff 0%, #fff 62%, rgba(255, 255, 255, 0) 100%),
      linear-gradient(180deg, #f0f1f6 0%, #eaecf2 25%, #dde0eb 50%, #e1e4ee 58%, #f5f6fa 66%, #fff 73%, #fff 86%, #f5f6f9 100%);
  }

  .tabs {
    display: flex;
    flex: none;
    height: 22px;
  }

  .tabs button {
    box-sizing: border-box;
    border: 1px solid #888;
    border-width: 0 1px 1px 0;
    background: #d3d3d3;
    color: #333;
    font-size: 12px;
  }

  .tabs .active {
    border-bottom-color: #fff;
    background: #fff;
    font-weight: 600;
  }

  .work {
    display: flex;
    flex: 1;
    min-height: 0;
  }

  /* feature manager */
  aside {
    position: relative;
    display: flex;
    flex: none;
    flex-direction: column;
    box-sizing: border-box;
    width: 230px;
    padding: 4px 2px 6px 1px;
    border-right: 1px solid #888;
    background: #f6f6f6;
  }

  .grip {
    display: flex;
    flex: none;
    align-items: center;
    justify-content: center;
    height: 14px;
    margin-bottom: 4px;
    border: 1px solid #c3c7d6;
    border-width: 1px 0;
  }

  .panes {
    display: flex;
    flex: none;
    height: 26px;
    padding-left: 1px;
  }

  .panes button {
    display: flex;
    align-items: center;
    justify-content: center;
    box-sizing: border-box;
    width: 40px;
    border: 1px solid #999;
    border-left: 0;
    background: #d3d3d3;
  }

  .panes .active {
    border-bottom-color: #fff;
    background: #fff;
  }

  .panes .next {
    flex: 1;
    padding-left: 4px;
    border: 0;
    background: none;
  }

  .next svg {
    width: 8px;
    height: 14px;
    fill: none;
    stroke: #222;
    stroke-width: 2;
  }

  .filter {
    display: flex;
    flex: none;
    align-items: center;
    height: 24px;
    margin: 0 3px 0 4px;
    padding-left: 2px;
    border: 1px solid #bbb;
    border-top-color: #ddd;
  }

  .filter input {
    flex: 1;
    min-width: 0;
    border: 0;
    outline: 0;
    background: none;
  }

  .tree {
    flex: none;
    margin: 0;
    padding: 0;
    list-style: none;
    font-family: "Noto Sans", sans-serif;
  }

  .tree li {
    display: flex;
    align-items: center;
    height: 22px;
    gap: 5px;
    padding-left: 8px;
    white-space: nowrap;
  }

  .tree .root {
    padding-left: 4px;
  }

  .tree .child {
    padding-left: 31px;
  }

  .tree .off {
    color: #999;
  }

  .twist {
    box-sizing: border-box;
    width: 13px;
    height: 8px;
  }

  .twist::before {
    display: block;
    width: 0;
    border: 4px solid transparent;
    content: "";
  }

  .twist.closed::before {
    border-left-color: #666;
  }

  .twist.open::before {
    border-top-color: #666;
  }

  .rollback {
    flex: none;
    height: 3px;
    margin-bottom: auto;
    background: #4a85b5;
  }

  .scrollbar {
    display: flex;
    flex: none;
    height: 15px;
    background: #efefef;
  }

  .scrollbar button {
    flex: none;
    width: 16px;
  }

  .scrollbar svg {
    width: 8px;
    height: 10px;
    fill: none;
    stroke: #444;
    stroke-width: 2;
  }

  .track {
    flex: 1;
  }

  .thumb {
    width: 86%;
    height: 100%;
    background: #cdcdcd;
  }

  .handle {
    position: absolute;
    top: 385px;
    right: -9px;
    display: flex;
    align-items: center;
    justify-content: center;
    width: 9px;
    height: 40px;
    border: 1px solid #999;
    border-left: 0;
    background: #f6f6f6;
  }

  /* graphics area */
  main {
    position: relative;
    flex: 1;
    min-width: 0;
  }

  .hud {
    position: absolute;
    top: 6px;
    left: 681px;
    display: flex;
  }

  .hud .drop {
    margin-right: 8px;
  }

  .hud .more {
    margin-right: 7px;
  }

  .hud .arrow {
    width: 10px;
    margin-left: 5px;
  }

  .hud .caret {
    border-top-color: #888;
  }

  .docwindow {
    position: absolute;
    top: -14px;
    right: 4px;
    display: flex;
    gap: 12px;
  }

  .docwindow svg {
    display: block;
    width: 14px;
    height: 14px;
    fill: none;
    stroke: #999;
  }

  .docwindow .solid {
    fill: #888;
    stroke: none;
  }

  .bottle {
    position: absolute;
    top: 41px;
    left: 710px;
    width: 280px;
    height: 740px;
  }

  .edge {
    fill: none;
    stroke: #56a4f6;
    stroke-width: 4;
  }

  .edge.thin {
    stroke-width: 2;
  }

  .mouth {
    fill: #003468;
  }

  .inertia {
    fill: #e0708f;
  }

  .shaft {
    stroke: #d4668a;
    stroke-width: 9;
  }

  .inertia text {
    fill: #e9a3d0;
    font-size: 30px;
  }

  .triad {
    position: absolute;
    bottom: 41px;
    left: 25px;
    width: 60px;
    height: 60px;
    font-size: 11px;
  }

  footer {
    display: flex;
    flex: none;
    height: 7px;
    padding-left: 27px;
    overflow: hidden;
    border-top: 1px solid #888;
    background: #f6f6f6;
  }

  .steps {
    display: flex;
  }

  .steps i {
    box-sizing: border-box;
    width: 16px;
    height: 16px;
    border: 1px solid #888;
    background: #b8b8b8;
  }

  footer button {
    height: 12px;
    padding: 0 14px 0 12px;
    border-right: 1px solid #888;
    background: #d3d3d3;
    font-size: 12px;
    line-height: 12px;
  }

  footer .active {
    background: #fff;
    color: #000;
    font-weight: 700;
  }

  /* mass properties dialog */
  .dialog {
    position: absolute;
    top: 98px;
    right: 80px;
    box-sizing: border-box;
    width: 486px;
    border: 1px solid #666;
    background: #efefef;
    box-shadow: 0 6px 18px rgba(0, 0, 0, 0.35);
  }

  .caption {
    display: flex;
    align-items: center;
    height: 30px;
    padding: 0 1px 0 8px;
    background: #fff;
  }

  .caption .icon {
    width: 16px;
    height: 16px;
  }

  .caption h2 {
    flex: 1;
    margin: 0 0 1px 5px;
    font-size: 11px;
    font-weight: 400;
  }

  .caption button {
    width: 45px;
    height: 30px;
  }

  .caption svg {
    width: 11px;
    height: 11px;
    fill: none;
    stroke: #000;
  }

  .caption button:disabled svg {
    stroke: #ccc;
  }

  .content {
    padding: 5px 29px 15px 15px;
  }

  .selection {
    display: flex;
    align-items: flex-start;
  }

  .selection > .icon {
    margin-top: 6px;
  }

  .picked {
    box-sizing: border-box;
    width: 303px;
    height: 62px;
    margin: 0 auto 0 12px;
    padding: 0 2px;
    border: 2px solid #5fabdb;
    background: #cde4f8;
  }

  .push {
    box-sizing: border-box;
    height: 21px;
    border: 1px solid #a5a5a5;
    background: #e1e1e1;
  }

  .options {
    width: 73px;
    margin-top: 20px;
  }

  .fields {
    padding: 0 1px 0 30px;
  }

  .actions {
    display: flex;
    gap: 20px;
    margin: 6px 0 4px 1px;
  }

  .override {
    width: 192px;
  }

  .recalc {
    width: 90px;
  }

  .tick {
    display: flex;
    align-items: center;
    gap: 3px;
    height: 22px;
  }

  .tick input {
    box-sizing: border-box;
    width: 13px;
    height: 13px;
    margin: 0;
    border: 1px solid #333;
    background: #fff;
    appearance: none;
  }

  .tick input:checked::after {
    display: block;
    width: 7px;
    height: 3px;
    margin: 2px 1px;
    border: 1px solid #222;
    border-width: 0 0 1px 1px;
    content: "";
    transform: rotate(-45deg);
  }

  .relative {
    display: flex;
    align-items: center;
    justify-content: space-between;
    margin: 1px 0 6px;
  }

  select {
    box-sizing: border-box;
    width: 218px;
    height: 21px;
    padding: 0 5px;
    border: 1px solid #777;
    border-radius: 0;
    background: #fff url("data:image/svg+xml,%3Csvg xmlns='http://www.w3.org/2000/svg' width='9' height='6'%3E%3Cpath d='M1 1l3.500 3.500L8 1' fill='none' stroke='%23444'/%3E%3C/svg%3E") no-repeat right 4px center;
    appearance: none;
  }

  .report {
    box-sizing: border-box;
    width: 394px;
    overflow: hidden;
    padding-top: 1px;
    border: 1px solid #fff;
    border-top: 2px solid #777;
    border-left: 2px solid #777;
  }

  pre {
    margin: 0;
    font: inherit;
  }

  table {
    margin-left: 20px;
    border-spacing: 0;
    table-layout: fixed;
    width: 420px;
  }

  .axes table {
    width: 280px;
  }

  td {
    padding: 0;
    white-space: pre;
  }

  .axes td:first-child {
    padding-left: 3px;
  }

  .report .scrollbar {
    margin-top: 14px;
  }

  .buttons {
    display: flex;
    margin-top: 9px;
  }

  .help {
    width: 88px;
  }

  .print {
    width: 92px;
    margin: 0 auto 0 60px;
  }

  .copy {
    width: 121px;
  }
</style>
